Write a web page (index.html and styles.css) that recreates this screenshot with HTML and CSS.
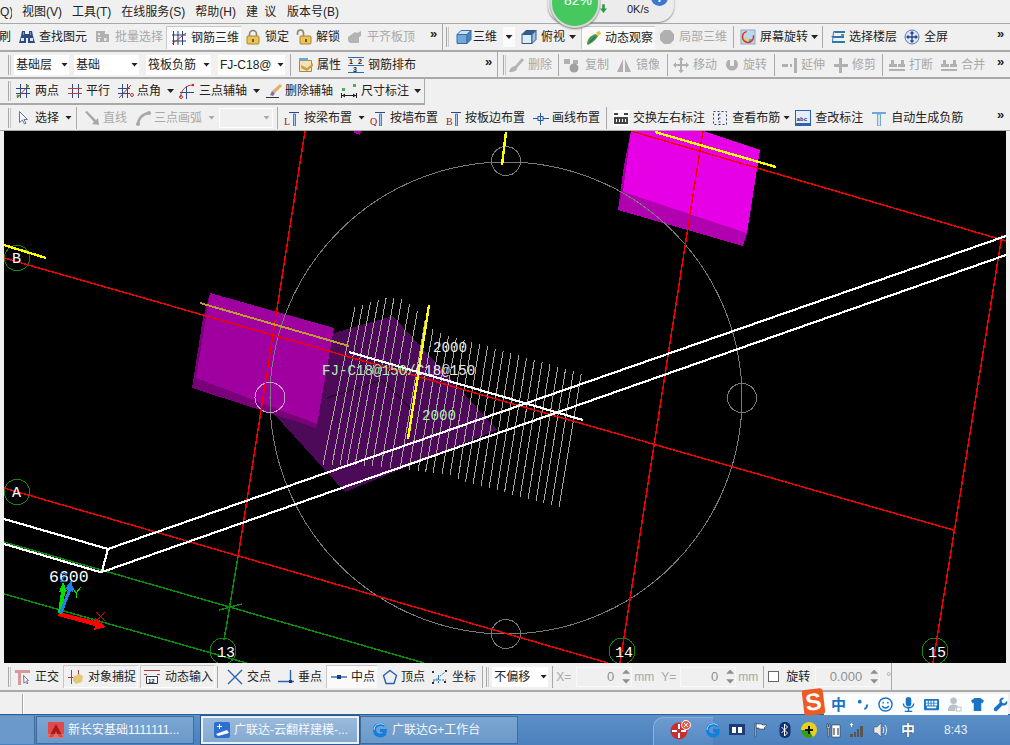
FILE: index.html
```html
<!DOCTYPE html>
<html lang="zh-CN">
<head>
<meta charset="utf-8">
<title>广联达-云翻样建模</title>
<link rel="stylesheet" href="styles.css">
</head>
<body>
<div class="app">
  <nav class="menubar">
    <span class="m-q">Q)</span><span>视图(V)</span><span>工具(T)</span><span>在线服务(S)</span><span>帮助(H)</span><span class="m-jy">建 议</span><span>版本号(B)</span>
  </nav>

  <div class="row r1">
    <div class="bar b1-1">
      <span class="tool"><span class="cut">刷</span></span>
      <span class="tool"><svg class="ic" viewBox="0 0 16 16"><path fill="#2b4a86" d="M2 7l1-5h3v3h4V2h3l1 5 2 7H9V9H7v5H0z"/><path fill="#dfe6f2" d="M2 9h3v3H2zm9 0h3v3h-3z"/><path fill="#7f9ac8" d="M4 3h1v3H4zm7 0h1v3h-1z"/></svg><span>查找图元</span></span>
      <span class="tool off"><svg class="ic" viewBox="0 0 16 16"><path fill="#b0b0b0" d="M1 2h9v3h4v8H1z"/><path fill="#e8e8e8" d="M3 4h2v2H3zm0 4h3v1H3zm0 2h2v2H3zm6-1h3l-1 3H9z"/></svg><span>批量选择</span></span>
      <span class="tool pressed"><svg class="ic" viewBox="0 0 16 16" fill="none" stroke="#23417f"><path d="M2.500 1v14M7 1v14M11.500 1v14M1 5h14M1 11h14"/><path stroke="#b04040" d="M1 14L15 3"/></svg><span>钢筋三维</span></span>
      <span class="tool l-press"><svg class="ic" viewBox="0 0 16 16"><path fill="none" stroke="#8a8470" stroke-width="1.600" d="M4.500 8V5a3.500 3.500 0 0 1 7 0v3"/><rect x="2" y="7" width="12" height="8" rx="1" fill="#e9c45e" stroke="#a9862c"/><path fill="#7a5c14" d="M7 10h2v3H7z"/></svg><span>锁定</span></span>
      <span class="tool l-1"><svg class="ic" viewBox="0 0 16 16"><path fill="none" stroke="#8a8470" stroke-width="1.600" d="M1.500 6V4a3 3 0 0 1 6 0v3"/><rect x="4" y="7" width="11" height="8" rx="1" fill="#e9c45e" stroke="#a9862c"/><path fill="#7a5c14" d="M9 10h2v3H9z"/></svg><span>解锁</span></span>
      <span class="tool off l-1"><svg class="ic" viewBox="0 0 16 16"><path fill="#b4b4b4" d="M1 8l7-5 2 1 4-2v5l-2 1v6H3L1 12z"/></svg><span>平齐板顶</span></span>
      <span class="chev">»</span>
    </div>
    <div class="bar b1-2">
      <span class="grip"></span>
      <span class="tool g1 l-1"><svg class="ic" viewBox="0 0 16 16"><path fill="#6fa9dc" stroke="#3d6f9e" d="M1 5.500h10v9H1z"/><path fill="#c5e0f5" stroke="#3d6f9e" d="M1 5.500L5 1.500h10l-4 4z"/><path fill="#4a86bd" stroke="#3d6f9e" d="M11 5.500l4-4v9l-4 4z"/></svg><span>三维</span></span>
      <span class="ddbox l-2"><i class="dd"></i></span>
      <span class="tool"><svg class="ic" viewBox="0 0 16 16"><path fill="#dcecf8" stroke="#35567c" d="M1 5.500h10v9H1z"/><path fill="#2e5f92" stroke="#35567c" d="M1 5.500L5 1.500h10l-4 4z"/><path fill="#9fc4e4" stroke="#35567c" d="M11 5.500l4-4v9l-4 4z"/></svg><span>俯视</span></span>
      <i class="dd l-4"></i>
      <span class="tool pressed l-3 g3"><svg class="ic" viewBox="0 0 16 16"><path fill="#4c9a3c" d="M1 14c0-5 4-9 9-10l2 2c-2 4-6 7-10 9z"/><path fill="#e2c93e" d="M10 2l4-1 1 3-3 2z"/><path fill="#2e6a8c" d="M3 12l6-6 1 1-6 6z"/></svg><span>动态观察</span></span>
      <span class="tool off l-4"><svg class="ic" viewBox="0 0 16 16"><path fill="#b0b0b0" d="M5 1h6l4 4v6l-4 4H5l-4-4V5z"/></svg><span>局部三维</span></span>
      <span class="sep l-2"></span>
      <span class="tool l-2"><svg class="ic" viewBox="0 0 16 16"><rect x="1" y="1" width="14" height="14" fill="#bcd8ef" stroke="#8da8c2"/><path fill="#e6d35e" d="M4 9h4v4H4z"/><path fill="#6cb56c" d="M9 10h3v3H9z"/><circle cx="8" cy="8" r="5.500" fill="none" stroke="#d8362a" stroke-width="1.500" stroke-dasharray="24 8"/></svg><span>屏幕旋转</span></span>
      <i class="dd l-5"></i>
      <span class="sep l-4"></span>
      <span class="tool g3 l-1"><svg class="ic" viewBox="0 0 16 16"><path fill="#2f77ad" d="M3 2h12v2H5zM1 7h13v2H3z"/><path fill="#4aa35c" d="M11 5h3v2h-3z"/><path fill="#2f77ad" d="M2 12h13v2H2z"/><path fill="none" stroke="#2f77ad" d="M3.500 3L2.500 13"/></svg><span>选择楼层</span></span>
      <span class="tool l-1"><svg class="ic" viewBox="0 0 16 16"><circle cx="8" cy="8" r="7" fill="#dce6f4" stroke="#5b7ba8"/><path fill="none" stroke="#23468a" stroke-width="1.300" d="M8 3v10M3 8h10M6.500 4.500L8 3l1.500 1.500M6.500 11.500L8 13l1.500-1.500M4.500 6.500L3 8l1.500 1.500M11.500 6.500L13 8l-1.500 1.500"/></svg><span>全屏</span></span>
      <span class="chev">»</span>
    </div>
  </div>

  <div class="row r2">
    <div class="bar b2-1">
      <span class="grip"></span>
      <span class="combo c55 l-5"><b>基础层</b><i class="dd"></i></span>
      <span class="combo c65 l-3"><b>基础</b><i class="dd"></i></span>
      <span class="combo c65 l-1"><b>筏板负筋</b><i class="dd"></i></span>
      <span class="combo c67 l-1"><b>FJ-C18@</b><i class="dd"></i></span>
      <span class="sep l-3"></span>
      <span class="tool g3 l-1"><svg class="ic" viewBox="0 0 16 16"><path fill="#f3e3b5" stroke="#a8894c" d="M1.500 3.500h12v11h-12z"/><path fill="#c9a24a" d="M3 8l6 3 6-5v3l-6 5-6-3z"/><path fill="#6da6d8" d="M1 1h9v2.500H1z"/></svg><span>属性</span></span>
      <span class="tool l-1"><svg class="ic" viewBox="0 0 16 16"><path fill="none" stroke="#2f6db0" d="M0 .5h16M0 8.500h16M0 15.500h16"/><text class="num" x="1" y="7">1</text><text class="num" x="10" y="7">2</text><text class="num" x="5" y="15">3</text></svg><span>钢筋排布</span></span>
      <span class="chev">»</span>
    </div>
    <div class="bar b2-2">
      <span class="grip"></span>
      <span class="tool off l-6"><svg class="ic" viewBox="0 0 16 16"><path fill="#b4b4b4" d="M1 15c1-4 3-6 6-6l7-8 2 2-7 8c0 2-1 4-8 4z"/></svg><span>删除</span></span>
      <span class="sep l-2"></span>
      <span class="tool off g6 l-4"><svg class="ic" viewBox="0 0 16 16"><path fill="#b0b0b0" d="M1 2h6v5H1zM10 3h5v4h-5z"/><circle cx="11" cy="11" r="4.500" fill="#a0a0a0"/></svg><span>复制</span></span>
      <span class="tool off l-1"><svg class="ic" viewBox="0 0 16 16"><path fill="#b0b0b0" d="M7 2v13H1zM9 2v13h6zm2 5v6h2z"/></svg><span>镜像</span></span>
      <span class="sep l-1"></span>
      <span class="tool off l-3"><svg class="ic" viewBox="0 0 16 16"><path fill="#b0b0b0" d="M8 0l3 3H9v4h4V5l3 3-3 3V9H9v4h2l-3 3-3-3h2V9H3v2L0 8l3-3v2h4V3H5z"/></svg><span>移动</span></span>
      <span class="tool off g3 l-1"><svg class="ic" viewBox="0 0 16 16"><path fill="#b0b0b0" d="M4 3h2v6h4V3h2a6 6 0 1 1-8 0z"/></svg><span>旋转</span></span>
      <span class="sep l-1"></span>
      <span class="tool off g3 l-1"><svg class="ic" viewBox="0 0 16 16"><path fill="#b0b0b0" d="M0 7h6v3H0zM8 7h2v3H8zM12 1h3v15h-3z"/></svg><span>延伸</span></span>
      <span class="tool off g3"><svg class="ic" viewBox="0 0 16 16"><path fill="#b0b0b0" d="M1 7h14v3H1zM6 1h3v15H6z"/></svg><span>修剪</span></span>
      <span class="sep l-2"></span>
      <span class="tool off l-2"><svg class="ic" viewBox="0 0 16 16"><path fill="#b0b0b0" d="M2 3h3v4h3v3H0V7h2zM12 3h3v4h1v3H9V7h3z"/><path fill="#b0b0b0" d="M0 12h16v2H0z"/></svg><span>打断</span></span>
      <span class="tool off"><svg class="ic" viewBox="0 0 16 16"><path fill="#b0b0b0" d="M2 3h3v4h3v3H0V7h2zM12 3h3v4h1v3H9V7h3z"/><path fill="#b0b0b0" d="M0 12h16v2H0z"/></svg><span>合并</span></span>
      <span class="chev">»</span>
    </div>
  </div>

  <div class="row r3">
    <div class="bar b3">
      <span class="grip"></span>
      <span class="tool l-4"><svg class="ic" viewBox="0 0 16 16" fill="none" stroke="#2d4a86"><path d="M5.500 1v14M11.500 1v14M1 5.500h14M1 10.500h14"/><path stroke="#c22e2e" d="M2 15L14 2"/><circle cx="3" cy="13" r="1.500" fill="#4b9e3a" stroke="none"/><circle cx="12.500" cy="3" r="1.500" fill="#4b9e3a" stroke="none"/></svg><span>两点</span></span>
      <span class="tool g3"><svg class="ic" viewBox="0 0 16 16" fill="none"><path stroke="#2d4a86" d="M5.500 1v14M11.500 1v14"/><path stroke="#c23a4a" d="M1 5.500h14M1 10.500h14"/></svg><span>平行</span></span>
      <span class="tool g3"><svg class="ic" viewBox="0 0 16 16" fill="none" stroke="#2d4a86"><path d="M4.500 1v14M9.500 1v14M0 5.500h12M0 10.500h12"/><path stroke="#c22e2e" d="M1 15L13 2"/><circle cx="14" cy="12" r="1.500" stroke="#c22e2e"/></svg><span>点角</span></span>
      <i class="dd l-2"></i>
      <span class="tool l-3"><svg class="ic" viewBox="0 0 16 16" fill="none" stroke="#2d4a86"><path d="M7.500 3v13M1 9.500h14"/><path stroke="#c22e2e" d="M1.500 14C2 7 7 2 14 2"/><circle cx="2" cy="14" r="1.500" stroke="#c22e2e"/><circle cx="14" cy="2" r="1.200" fill="#c22e2e" stroke="none"/></svg><span>三点辅轴</span></span>
      <i class="dd l-2"></i>
      <span class="tool g0 l-3"><svg class="ic w20" viewBox="0 0 20 16"><path fill="#333" d="M1 14h13v1H1z"/><path fill="#8b6aa8" d="M5 12l2-4 3 2-2 3z"/><path fill="#d9b264" d="M7 8l8-7 2 2-7 7z"/></svg><span>删除辅轴</span></span>
      <span class="tool"><svg class="ic" viewBox="0 0 16 16"><path fill="#4bb05a" d="M1 5h3v3H1zM12 1h3v3h-3z"/><path fill="none" stroke="#222" d="M.5 10v5M15.500 10v5M1 12.500h14"/><path fill="#222" d="M1 12.500l3-2v4zM15 12.500l-3-2v4z"/></svg><span>尺寸标注</span></span>
      <i class="dd l-3"></i>
    </div>
  </div>

  <div class="row r4">
    <div class="bar b4">
      <span class="grip"></span>
      <span class="tool l-4"><svg class="ic" viewBox="0 0 16 16"><path fill="#f4f4f4" stroke="#5f78a0" d="M4.500 1.500v11l3-2.500 2 4 1.500-.8-2-3.700h3.500z"/></svg><span>选择</span></span>
      <i class="dd l-2"></i>
      <span class="sep l-4"></span>
      <span class="tool off g3 l-1"><svg class="ic" viewBox="0 0 16 16"><path fill="#a8a8a8" d="M1 2l2-1 9 9 2-2 1 7-7-1 2-2z"/></svg><span>直线</span></span>
      <span class="tool off g3"><svg class="ic" viewBox="0 0 16 16"><path fill="none" stroke="#a8a8a8" stroke-width="2.500" d="M3 15C3 9 7 4 14 3"/><circle cx="3" cy="14" r="2" fill="#a8a8a8"/><circle cx="14" cy="3" r="2" fill="#a8a8a8"/></svg><span>三点画弧</span></span>
      <i class="dd light l-2"></i>
      <span class="emptycombo l-4"><i class="dd light"></i></span>
      <span class="sep l-4"></span>
      <span class="tool l-2"><svg class="ic" viewBox="0 0 16 16"><text class="ltr" x="0" y="15">L</text><path fill="#a9cdec" stroke="#4b7eb3" d="M9.500 4v12h2V4z"/><path fill="none" stroke="#2d4a86" d="M5 2.500h10"/></svg><span>按梁布置</span></span>
      <i class="dd l-2"></i>
      <span class="tool l-3"><svg class="ic" viewBox="0 0 16 16"><text class="ltr" x="0" y="15">Q</text><path fill="#a9cdec" stroke="#4b7eb3" d="M9.500 4v12h2V4z"/><path fill="none" stroke="#2d4a86" d="M5 2.500h10"/></svg><span>按墙布置</span></span>
      <span class="tool g3"><svg class="ic" viewBox="0 0 16 16"><text class="ltr" x="0" y="15">B</text><path fill="#a9cdec" stroke="#4b7eb3" d="M9.500 4v12h2V4z"/><path fill="none" stroke="#2d4a86" d="M5 2.500h10"/></svg><span>按板边布置</span></span>
      <span class="tool g3"><svg class="ic" viewBox="0 0 16 16" fill="none" stroke="#2d5a9e"><path d="M0 8.500h5M10 8.500h6M7.500 3v12"/><rect x="5" y="6.500" width="5" height="4"/></svg><span>画线布置</span></span>
      <span class="sep l-2"></span>
      <span class="tool l-2"><svg class="ic" viewBox="0 0 16 16"><path fill="#fff" d="M0 0h16v16H0z"/><path fill="#444" d="M1 7h14v7H1z"/><path fill="#fff" d="M3 9h1v3H3zm3 0h1v3H6zm3 0h1v3H9zm3 0h1v3h-1z"/><path fill="#444" d="M1 3h4v2H1zm10 0h4v2h-4z"/></svg><span>交换左右标注</span></span>
      <span class="tool l-1"><svg class="ic" viewBox="0 0 16 16" fill="none" stroke="#2d3f70" stroke-dasharray="2 2"><path d="M1.500 1.500h13v13h-13zM6.500 4v8M6.500 4h4M6.500 8h3M6.500 12h4"/></svg><span>查看布筋</span></span>
      <i class="dd l-5"></i>
      <span class="tool l-3"><svg class="ic" viewBox="0 0 16 16"><rect x=".5" y=".5" width="15" height="15" fill="#e4eefa" stroke="#2a62b4"/><text class="abc" x="1.500" y="11">abc</text><path fill="#2a62b4" d="M0 13h16v3H0z"/></svg><span>查改标注</span></span>
      <span class="tool"><svg class="ic" viewBox="0 0 16 16"><path fill="#cfe4f6" stroke="#6fa7d6" d="M6.500 4v12h3V4z"/><path fill="#6fa7d6" d="M1 2h14v2H1z"/></svg><span>自动生成负筋</span></span>
      <span class="chev">»</span>
    </div>
  </div>

  <div class="viewport">
    <svg class="cad" viewBox="4 131 1002 532">
      <rect x="4" y="131" width="1002" height="532" fill="#000"/>
      <path fill="#4d0a58" d="M334 333L393 316 497 430 345 492 273 413z"/>
      <path fill="none" stroke="#330638" stroke-width="2" d="M327 398L382 380 412 410"/>
      <path fill="#7a007a" d="M210 293L203 318 192 388 316 428 320 412 197 377z"/>
      <path fill="#a000a0" d="M210 293L334 328 317 424 196 378z"/>
      <path fill="#a400a8" d="M354 131h7l-1 4-6-2z"/>
      <path fill="#a000a0" d="M631 131L624 165 618 210 623 192z"/>
      <path fill="#e600e6" d="M631 131H703L760 150 747 233 623 192z"/>
      <path fill="#b000b0" d="M623 192L747 233 743 246 618 210z"/>
      <g fill="none" stroke="#7a7a7a">
        <circle cx="506" cy="398" r="236"/>
        <circle cx="506" cy="161" r="14.500"/>
        <circle cx="506" cy="634" r="14.500"/>
        <circle cx="742" cy="398" r="14.500"/>
      </g>
      <circle cx="270" cy="397.500" r="15" fill="none" stroke="#c89ac8"/>
      <path fill="none" stroke="#a8a89c" d="M355 307L323 465M362.800 305L332 465M370.600 302L340 465M378.400 300L347 465M386.200 297.500L355 465M394 298L364 466M401.800 299L372 466M409.600 304L381 467M417.400 311L390 468M425.200 320L400 469M433 329L409 470M440.800 333.500L418 471M448.600 336L425.600 472M456.400 338L433 473M464.200 340L442 474M472 342L450 475M479.800 344L458 479M487.600 346.400L465.600 482M495.400 348.700L473 484M503.200 350.900L481 486M511 353.200L489 488M518.800 355.500L497 490M526.600 357.700L504.600 492M534.400 360L512.400 495M542.200 362.200L520 497M550 364.500L528 499M557.800 366.800L536 501M565.600 369L543.600 503M573.400 371.300L551.400 505M581.200 373.500L559 507"/>
      <g fill="none" stroke="#0b8a0b" stroke-width="1.500">
        <path d="M4 542L424 663M4 594L250 664M238 557L224 640M219 610L242 604"/>
      </g>
      <g fill="none" stroke="#0b8a0b">
        <circle cx="17" cy="492" r="12.700"/>
        <circle cx="17" cy="258" r="12.700"/>
        <circle cx="223" cy="651" r="13"/>
        <circle cx="622" cy="651" r="13"/>
        <circle cx="935" cy="651" r="13"/>
      </g>
      <g fill="none" stroke="#f00000" stroke-width="1.500">
        <path d="M305 131L238 557M703 131L620 663M1002 235L933 663"/>
        <path d="M4 258L953 530M631 131L1006 241M4 488L608 663"/>
      </g>
      <g fill="none" stroke="#ffff00" stroke-width="2.400">
        <path d="M655 132L776 167M4 245L46 258M506 132L502 165M429 305L408 439"/>
      </g>
      <path fill="none" stroke="#c29a34" stroke-width="2" d="M200 303L349 346"/>
      <g fill="none" stroke="#fff" stroke-width="2.200">
        <path d="M4 519L108 549 1006 236M108 549L102 571M4 544L100 572 105 571 1006 255"/>
        <path d="M349 352L583 420"/>
      </g>
      <path fill="#ff0000" d="M59 612L95 621 95 618 106 627 94 630 95 626 58 616z"/>
      <path fill="#00e000" d="M58 613L61 592 59 592 63 582 67 591 65 592 62 614z"/>
      <path fill="#1e7fe8" d="M59 613L68 590 65 589 72 579 73 592 71 591 62 614z"/>
      <path fill="none" stroke="#00e000" d="M73 588l3 5 5-6M76 593v5"/>
      <path fill="none" stroke="#f00000" d="M96 612l9 9M105 612l-9 9"/>
      <text class="lbl big" x="49" y="582">6600</text>
      <text class="lbl" x="12" y="497">A</text>
      <text class="lbl" x="12" y="263">B</text>
      <text class="lbl" x="217" y="657">13</text>
      <text class="lbl" x="615" y="657">14</text>
      <text class="lbl" x="928" y="657">15</text>
      <text class="lbl zed" x="60" y="582">Z</text>
      <text class="lbl dim" x="433" y="352">2000</text>
      <text class="lbl dim pale" x="322" y="375">FJ-C18@150/<tspan class="wht">C18@150</tspan></text>
      <text class="lbl dim pale" x="422" y="420">2000</text>
    </svg>
  </div>

  <div class="row rb">
    <div class="bar bb">
      <span class="grip"></span>
      <span class="tool l-4"><svg class="ic" viewBox="0 0 16 16"><path fill="#d79a9a" d="M0 1h15v3H6v12H3V4H0z"/><path fill="#f4f4f4" stroke="#6a7a90" d="M8.500 6.500l5 5-2 .5 1.500 2-1 .8-1.500-2-1.500 1.500z"/></svg><span>正交</span></span>
      <span class="tool framed l-4"><svg class="ic" viewBox="0 0 16 16"><path fill="none" stroke="#a04040" d="M3.500 1v14M10.500 1v6M0 8.500h5"/><path fill="#e3c878" d="M5 8l6-3 4 2-1 6-6 2-3-3z"/></svg><span>对象捕捉</span></span>
      <span class="tool framed f2"><svg class="ic" viewBox="0 0 16 16"><path fill="none" stroke="#a04040" d="M0 1.500h16M0 5.500h3M13 5.500h3"/><path fill="#fff" stroke="#333" d="M2.500 7.500h11v7h-11z"/><text class="num2" x="4" y="14">12</text></svg><span>动态输入</span></span>
      <span class="sep l-6"></span>
      <span class="tool l1"><svg class="ic" viewBox="0 0 16 16"><path fill="none" stroke="#2a62b4" stroke-width="1.400" d="M1 1l14 14M15 1L1 15"/></svg><span>交点</span></span>
      <span class="tool l-1"><svg class="ic" viewBox="0 0 16 16"><path fill="none" stroke="#2a62b4" stroke-width="1.400" d="M0 12.500h16M12.500 1v11"/><rect x="11" y="11" width="3" height="3" fill="#173a80"/></svg><span>垂点</span></span>
      <span class="tool pressed p3"><svg class="ic" viewBox="0 0 16 16"><path fill="none" stroke="#2a62b4" stroke-width="1.400" d="M0 8h16"/><rect x="6" y="6" width="4" height="4" fill="#173a80"/></svg><span>中点</span></span>
      <span class="tool g3 l-3"><svg class="ic" viewBox="0 0 16 16"><path fill="none" stroke="#2a62b4" stroke-width="1.400" d="M8 1.500l6.500 5-2.500 8H4l-2.500-8z"/></svg><span>顶点</span></span>
      <span class="tool l-1"><svg class="ic" viewBox="0 0 16 16"><path fill="none" stroke="#2a7ab4" stroke-dasharray="2 1" d="M1 13L13 3M6.500 6v9M1 11h13"/><rect x="0" y="2" width="2" height="2" fill="#333"/><rect x="13" y="1" width="2" height="2" fill="#333"/><rect x="0" y="13" width="2" height="2" fill="#333"/><rect x="12" y="12" width="2" height="2" fill="#333"/></svg><span>坐标</span></span>
      <span class="sep l-2"></span>
      <span class="grip l-5"></span>
      <span class="combo c56 l-5"><b>不偏移</b><i class="dd"></i></span>
      <span class="sep l-4"></span>
      <span class="fld off l-5">X=</span>
      <span class="num-in n56 l-3"><b>0</b><i class="spin"></i></span>
      <span class="fld off l-6">mm</span>
      <span class="fld off l-1">Y=</span>
      <span class="num-in n56 l-4"><b>0</b><i class="spin"></i></span>
      <span class="fld off l-6">mm</span>
      <span class="sep l-3"></span>
      <span class="check l-4"></span>
      <span class="fld l-1">旋转</span>
      <span class="num-in n65 l-3"><b>0.000</b><i class="spin"></i></span>
      <span class="fld off l-2">°</span>
    </div>
  </div>

  <div class="status"><span class="stgrip"></span></div>

  <footer class="taskbar">
    <span class="tb-start"></span>
    <span class="tb-btn">
      <svg class="tb-ic" viewBox="0 0 16 16"><rect width="16" height="16" fill="#e04a4a"/><path fill="#a81818" d="M8 2l7 13H11L8 9l-3 6H1z"/><rect y="12" width="16" height="4" fill="#f4a0a0" opacity=".4"/></svg>
      <span class="tb-t">新长安基础1111111...</span>
    </span>
    <span class="tb-btn active">
      <svg class="tb-ic" viewBox="0 0 16 16"><rect width="16" height="16" rx="2" fill="#2f6fd0"/><path fill="#fff" d="M2 12l11-4 2 3-11 3zM5 2h1v5H5zM3 4h5v1H3z"/></svg>
      <span class="tb-t">广联达-云翻样建模-...</span>
    </span>
    <span class="tb-btn">
      <svg class="tb-ic" viewBox="0 0 16 16"><path fill="#0f7fe0" d="M14 3C9-1 1 1 1 8s8 10 13 5l1-6H8v3h3c-1 3-7 2-7-2s6-5 8-3z"/><path fill="none" stroke="#d8f2ff" stroke-width=".8" d="M13 3.500C9 0 2 2 2 8"/></svg>
      <span class="tb-t">广联达G+工作台</span>
    </span>
    <span class="tray">
      <span class="showhide"></span>
      <svg class="tr-fan" viewBox="0 0 22 20"><circle cx="9" cy="11" r="8.500" fill="#c83030"/><path fill="#fff" d="M8 4h2v5H8zM8 13h2v5H8zM2 10h5v2H2zM11 10h5v2h-5z"/><circle cx="16" cy="5" r="4.500" fill="#e85a40" stroke="#fff"/><path stroke="#fff" d="M14 3l4 4M18 3l-4 4"/></svg>
      <svg class="tr" viewBox="0 0 16 16"><path fill="#0f7fe0" d="M14 3C9-1 1 1 1 8s8 10 13 5l1-6H8v3h3c-1 3-7 2-7-2s6-5 8-3z"/><path fill="none" stroke="#d8f2ff" stroke-width=".8" d="M13 3.500C9 0 2 2 2 8"/></svg>
      <svg class="tr" viewBox="0 0 16 16"><rect y="2" width="16" height="11" fill="#1d3b78"/><path fill="#fff" d="M3 5h4v6H3zM9 5h4v6H9z"/></svg>
      <svg class="tr" viewBox="0 0 16 16"><path fill="#fff" stroke="#222" stroke-width=".5" d="M2 1h1v14H2zM3 2h6v1h5l-3 3 1 1H6V6H3z"/></svg>
      <svg class="tr" viewBox="0 0 16 16"><rect x="2.500" width="11" height="16" rx="5" fill="#12306a"/><path fill="none" stroke="#fff" d="M4.500 5l6 6-3 3V2l3 3-6 6"/></svg>
      <svg class="tr" viewBox="0 0 16 16"><circle cx="8" cy="8" r="8" fill="#e8d020"/><path fill="#3a9a20" d="M0 8a8 8 0 0 0 12 7L8 8z"/><path fill="#111" d="M7 4h2v3h3v2H9v3H7V9H4V7h3z"/></svg>
      <svg class="tr" viewBox="0 0 16 16"><path fill="#fff" stroke="#222" stroke-width=".5" d="M7 3h8v12H7zM2 2h1v3h1V2h1v4H4v9H3V6H2z"/><path fill="none" stroke="#222" d="M9 6v7M13 6v7"/></svg>
      <svg class="tr" viewBox="0 0 16 16"><path fill="#555" d="M5 10h2v5H5zM8 7h2v8H8zM11 4h3v11h-3zM1 12h3v3H1z"/><path fill="#fff" d="M2 1h1v1h1v1H3v2H2V3H1V2h1z"/></svg>
      <svg class="tr" viewBox="0 0 16 16"><path fill="#e8e8e8" stroke="#444" stroke-width=".5" d="M1 5h3l4-4v14l-4-4H1z"/><path fill="none" stroke="#eee" d="M10 5c1 2 1 4 0 6M12 3c2 3 2 7 0 10"/></svg>
      <span class="tr-zh">中</span>
      <span class="clock">8:43</span>
    </span>
  </footer>

  <div class="ball">
    <span class="ball-pct">82%</span>
    <svg class="ball-down" viewBox="0 0 8 10"><path fill="#2f9a48" d="M2.500 0h3v5H8L4 10 0 5h2.500z"/></svg>
    <span class="ball-speed">0K/s</span>
    <span class="ball-plus">+</span>
  </div>

  <div class="ime">
    <span class="ime-s">S</span>
    <div class="ime-bar">
      <span class="ime-zh">中</span>
      <svg class="ime-ic" viewBox="0 0 16 16"><circle cx="5" cy="5" r="2" fill="#1a74c4"/><path fill="none" stroke="#1a74c4" stroke-width="2" d="M13 8c0 3-1 4-3 5"/></svg>
      <svg class="ime-ic" viewBox="0 0 16 16" fill="none" stroke="#1a74c4" stroke-width="1.500"><circle cx="8" cy="8" r="7"/><path d="M4.500 9.500c1.500 3 5.500 3 7 0"/><path d="M5.500 5v2M10.500 5v2"/></svg>
      <svg class="ime-ic" viewBox="0 0 16 16"><rect x="5" y="0" width="6" height="10" rx="3" fill="#1a74c4"/><path fill="none" stroke="#1a74c4" stroke-width="1.500" d="M2.500 7c0 6 11 6 11 0M8 12v3M4 15.500h8"/></svg>
      <svg class="ime-ic" viewBox="0 0 16 16"><rect y="2" width="16" height="12" rx="1" fill="#1a74c4"/><path fill="#fff" d="M2 4h2v2H2zM5 4h2v2H5zM8 4h2v2H8zM11 4h3v2h-3zM2 7h2v2H2zM5 7h2v2H5zM8 7h2v2H8zM11 7h3v2h-3zM3 10h10v2H3z"/></svg>
      <svg class="ime-ic" viewBox="0 0 16 16"><circle cx="7" cy="4" r="3.500" fill="#b9c2cc"/><path fill="#b9c2cc" d="M1 15c0-6 3-7 6-7s4 1 5 3H9v4z"/><rect x="10" y="11" width="5" height="4" fill="#fff" stroke="#b9c2cc"/></svg>
      <svg class="ime-ic" viewBox="0 0 16 16"><path fill="#1a74c4" d="M5 1h6l4 3-2 3-1-1v9H4V6L3 7 1 4z"/></svg>
      <svg class="ime-ic" viewBox="0 0 16 16"><path fill="#1a74c4" d="M15 4l-3 3-2-1-1-2 3-3c-3-1-6 1-5 5L1 12c-1 2 1 4 3 3l6-6c4 1 6-2 5-5z"/></svg>
    </div>
  </div>
</div>
</body>
</html>
```

FILE: styles.css
```css
* { box-sizing: border-box; }
html, body { margin: 0; padding: 0; }
body { width: 1010px; height: 745px; overflow: hidden; background: #f0f0f0; }

.app {
  position: relative;
  width: 1010px;
  height: 745px;
  overflow: hidden;
  display: flex;
  flex-direction: column;
  font: 12px/16px "Liberation Sans", "Noto Sans CJK SC", sans-serif;
  color: #222;
  background: #f0f0f0;
}

.menubar {
  height: 24px;
  flex: none;
  display: flex;
  align-items: center;
  gap: 10px;
  border-bottom: 1px solid #a9a9a9;
  white-space: nowrap;
}
.m-q { width: 12px; overflow: hidden; }
.m-jy { width: 31px; word-spacing: 3px; }

.row { flex: none; display: flex; }
.r1 { height: 28px; border-bottom: 2px solid #a9a9a9; }
.r2 { height: 27px; border-bottom: 2px solid #a9a9a9; }
.r3 { height: 26px; }
.r4 { height: 26px; border-bottom: 1px solid #a9a9a9; }
.rb { height: 29px; border-bottom: 2px solid #a9a9a9; }

.bar {
  display: flex;
  align-items: center;
  gap: 8px;
  height: 100%;
  white-space: nowrap;
}
.b1-1 { width: 443px; border-right: 1px solid #a9a9a9; padding-right: 4px; }
.b1-2 { flex: 1; padding-left: 3px; padding-right: 5px; }
.b2-1 { width: 498px; border-right: 1px solid #a9a9a9; padding: 0 4px 0 8px; }
.b2-2 { flex: 1; padding: 0 5px; }
.b3 { width: 425px; border-right: 1px solid #a9a9a9; border-bottom: 2px solid #a9a9a9; padding-left: 8px; }
.b4 { width: 100%; padding: 0 5px 0 8px; }
.bb { width: 892px; border-right: 1px solid #a9a9a9; padding-left: 8px; }

.tool { display: flex; align-items: center; gap: 4px; flex: none; }
.g0 { gap: 0; }
.g1 { gap: 1px; }
.g3 { gap: 3px; }
.g6 { gap: 6px; }
.off { color: #a8a8a8; }
.cut { display: block; width: 12px; margin-left: -1px; }

.ic { display: block; width: 16px; height: 16px; flex: none; }
.ic.w20 { width: 20px; }

.grip {
  flex: none;
  width: 3px;
  height: 20px;
  border-left: 1px solid #a9a9a9;
  border-right: 1px solid #c8c8c8;
}
.sep { flex: none; width: 1px; height: 22px; background: #a9a9a9; }
.chev { margin-left: auto; width: 8px; font: bold 13px/12px "Liberation Sans", sans-serif; color: #222; margin-bottom: 6px; }

.pressed, .framed {
  padding: 1px 2px 1px 4px;
  margin-left: -5px;
  height: 23px;
  border: 1px solid #c8c8c8;
  border-width: 1px 0 0 1px;
}
.pressed { background: #fafafa; }
.b1-1 .pressed { margin-right: -4px; }
.l-press { margin-left: 0; }
.framed { box-shadow: inset -1px -1px 0 #fff; }
.framed.f2 { margin-left: -6px; padding-left: 3px; gap: 5px; }
.pressed.p3 { margin-left: -4px; }

.dd {
  display: block;
  flex: none;
  width: 7px;
  height: 4px;
  background: #222;
  clip-path: polygon(0 0, 100% 0, 50% 100%);
}
.dd.light { background: #a8a8a8; }
.ddbox { display: flex; align-items: center; justify-content: center; background: #fbfbfb; width: 12px; height: 20px; flex: none; margin-right: -2px; }

.combo {
  flex: none;
  display: flex;
  align-items: center;
  justify-content: space-between;
  height: 20px;
  background: #fff;
  padding-left: 2px;
  font-weight: normal;
}
.combo b { font-weight: normal; }
.combo .dd { width: 7px; margin-right: 1px; box-shadow: none; }
.c55 { width: 55px; }
.c56 { width: 56px; }
.c65 { width: 65px; }
.c67 { width: 67px; }
.emptycombo {
  flex: none;
  display: flex;
  align-items: center;
  justify-content: flex-end;
  width: 54px;
  height: 20px;
  padding-right: 2px;
  border: 1px solid #fff;
}

.fld { flex: none; }
.num-in {
  flex: none;
  display: flex;
  align-items: center;
  justify-content: flex-end;
  gap: 8px;
  height: 20px;
  padding-right: 1px;
  border: 1px solid #fafafa;
  color: #909090;
  font-size: 13px;
}
.num-in b { font-weight: normal; }
.n56 { width: 56px; }
.n65 { width: 65px; }
.spin {
  display: block;
  width: 8px;
  height: 14px;
  background: #8f8f8f;
  clip-path: polygon(50% 0, 100% 30%, 0 30%, 0 70%, 100% 70%, 50% 100%, 0 70%, 0 30%);
}
.check { flex: none; width: 11px; height: 11px; background: #fff; border: 1px solid #666; }

.l1 { margin-left: 1px; }
.l-1 { margin-left: -1px; }
.l-2 { margin-left: -2px; }
.l-3 { margin-left: -3px; }
.l-4 { margin-left: -4px; }
.l-5 { margin-left: -5px; }
.l-6 { margin-left: -6px; }

.num { font: bold 7px "Liberation Sans", sans-serif; fill: #222; }
.num2 { font: bold 6px "Liberation Sans", sans-serif; fill: #222; }
.ltr { font: 10px "Liberation Serif", serif; fill: #a01818; }
.abc { font: bold 6px "Liberation Mono", monospace; fill: #123a80; }

.viewport { flex: none; height: 532px; padding-left: 4px; }
.cad { display: block; width: 1002px; height: 532px; shape-rendering: crispEdges; }
.lbl {
  font: 15px "Liberation Mono", monospace;
  fill: #fff;
}
.lbl.big { font-size: 16.500px; }
.lbl.dim { font-size: 14.200px; fill: #eee; }
.lbl.pale { fill: #b0f0b0; }
.lbl .wht { fill: #eee; }
.lbl.zed { fill: #1e7fe8; font-size: 13px; }

.status { flex: none; height: 22px; padding: 2px 0 0 22px; }
.stgrip { display: block; width: 2px; height: 20px; border-left: 1px solid #a9a9a9; border-right: 1px solid #fff; }

.taskbar {
  flex: none;
  height: 31px;
  display: flex;
  align-items: stretch;
  padding: 1px 0;
  gap: 4px;
  color: #fff;
  background: linear-gradient(#5c90c8, #4b80bd);
  border-top: 1px solid #2e5f96;
}
.tb-start { width: 35px; flex: none; background: #6b99cb; border-right: 1px solid #3f6c9e; }
.tb-btn {
  flex: none;
  width: 158px;
  display: flex;
  align-items: center;
  gap: 4px;
  padding-left: 11px;
  background: linear-gradient(#7ca6d2, #6a99ca);
  border: 1px solid #3f6c9e;
  margin-left: -3px;
  margin-right: 3px;
}
.tb-btn.active { background: linear-gradient(#9abadb, #84a9d0); border: 2px solid #e8eff7; box-shadow: 0 0 0 1px #2c5a90; margin-left: 0; margin-right: 0; }
.tb-ic { display: block; width: 16px; height: 16px; flex: none; }
.tb-t { color: #f4f8fc; }

.tray { position: relative; flex: 1; display: flex; align-items: center; gap: 8px; padding-left: 145px; }
.showhide {
  position: absolute;
  left: 128px;
  top: 1px;
  bottom: -2px;
  width: 60px;
  border-left: 1px solid #8db2d8;
  border-top: 1px solid #8db2d8;
  border-top-left-radius: 10px;
  background: linear-gradient(#6d9bcf, #5588c2);
}
.tr { position: relative; display: block; width: 16px; height: 16px; flex: none; }
.tr-fan { position: relative; display: block; width: 22px; height: 20px; flex: none; margin-right: 5px; }
.tr-zh { position: relative; font-size: 14px; font-weight: bold; margin-left: 4px; color: #fff; text-shadow: 0 0 1px #000; }
.clock { font-size: 12px; margin-left: 21px; color: #e8f0f8; }

.ball {
  position: absolute;
  left: 548px;
  top: -8px;
  width: 126px;
  height: 30px;
  border-radius: 0 0 16px 16px;
  background: #ececec;
  box-shadow: 0 1px 2px #8a8a8a;
}
.ball::before {
  content: "";
  position: absolute;
  left: 2px;
  top: -14px;
  width: 46px;
  height: 46px;
  border-radius: 50%;
  background: #47c85f;
  border: 2px solid #d8d8d8;
  box-shadow: 0 1px 2px #777;
}
.ball-pct { position: absolute; left: 16px; top: 0; color: #fff; font-size: 14px; }
.ball-down { position: absolute; left: 52px; top: 12px; width: 7px; height: 9px; }
.ball-speed { position: absolute; left: 79px; top: 9px; font-size: 11px; color: #222; }
.ball-plus {
  position: absolute;
  left: 103px;
  top: -3px;
  width: 17px;
  height: 17px;
  border-radius: 50%;
  background: #3a78d0;
  color: #fff;
  font: bold 15px/17px "Liberation Sans", sans-serif;
  text-align: center;
}

.ime { position: absolute; left: 803px; top: 687px; width: 205px; height: 28px; display: flex; align-items: flex-end; }
.ime-s {
  position: relative;
  z-index: 1;
  width: 27px;
  height: 26px;
  background: #ee5a24;
  border-radius: 3px;
  transform: rotate(-7deg);
  color: #fff;
  font: bold 24px/26px "Liberation Sans", sans-serif;
  text-align: center;
}
.ime-bar {
  flex: 1;
  height: 21px;
  background: #fcfdfe;
  display: flex;
  align-items: center;
  padding-left: 7px;
  gap: 8px;
}
.ime-zh { color: #1a74c4; font-size: 15px; font-weight: bold; width: 16px; }
.ime-ic { display: block; width: 15px; height: 15px; flex: none; }
```
